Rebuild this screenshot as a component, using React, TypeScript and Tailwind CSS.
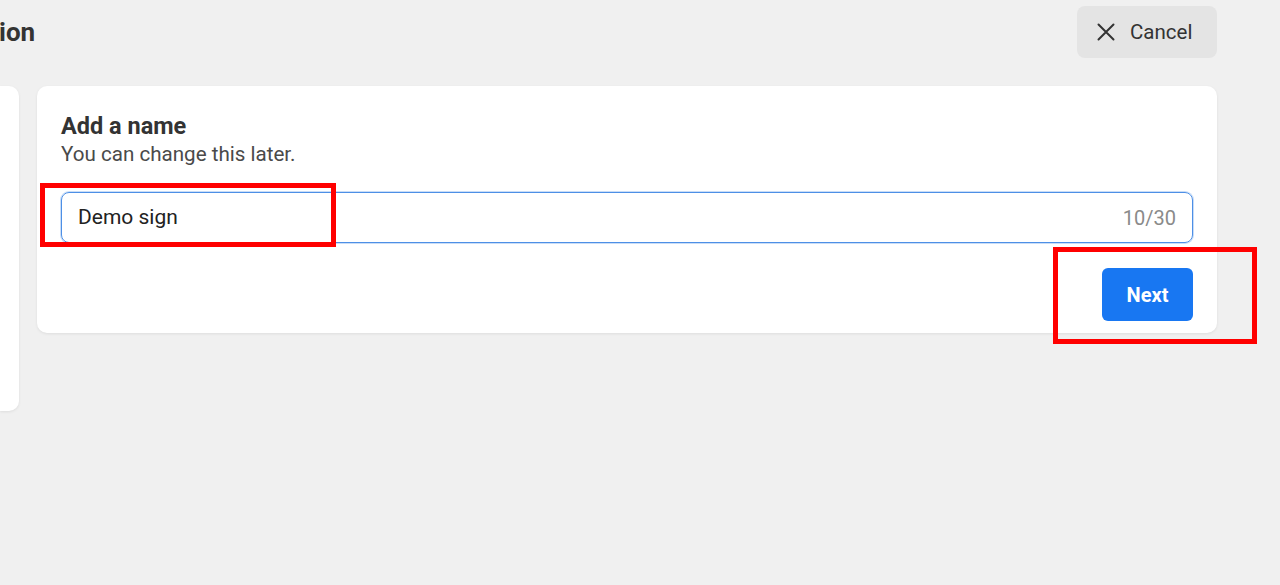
import React from "react";

const font = { fontFamily: "Roboto, 'Liberation Sans', sans-serif" };

const App: React.FC = () => {
  return (
    <div
      className="relative w-full h-[585px] overflow-hidden bg-[#f0f0f0] text-[#333]"
      style={font}
    >
      {/* Header */}
      <div className="flex items-center justify-between pt-[6px] pr-[63px]">
        <h1 className="text-[26px] font-bold leading-[52px] text-[#333] -ml-[1px]">ion</h1>
        <button
          type="button"
          className="flex items-center gap-[15px] h-[52px] w-[140px] pl-[20px] rounded-lg bg-[#e4e4e4] text-[20.5px] text-[#333]"
        >
          <svg width="18" height="18" viewBox="0 0 18 18" fill="none" stroke="#333" strokeWidth="2" strokeLinecap="round">
            <path d="M1.5 1.5 L16.5 16.5 M16.5 1.5 L1.5 16.5" />
          </svg>
          Cancel
        </button>
      </div>

      {/* Cards */}
      <div className="flex items-start gap-[18px] mt-[28px] pr-[63px]">
        <div className="w-[19px] h-[325px] bg-white rounded-r-[10px] shadow-[0_1px_3px_rgba(0,0,0,0.08)]" />
        <div className="flex-1 bg-white rounded-[10px] shadow-[0_1px_3px_rgba(0,0,0,0.08)] px-6 pt-[28px] pb-[12px]">
          <h2 className="text-[23.5px] font-bold leading-[24px] text-[#333]">Add a name</h2>
          <p className="text-[20.6px] leading-[22px] mt-[5px] text-[#4a4a4a]">You can change this later.</p>
          <div className="mt-[27px] h-[51px] flex items-center justify-between px-[16px] rounded-lg border border-[#4d8fe6] shadow-[0_0_0_1px_rgba(77,143,230,0.3)]">
            <span className="text-[21px] text-[#222]">Demo sign</span>
            <span className="text-[20px] text-[#8a8a8a]">10/30</span>
          </div>
          <div className="flex justify-end mt-[25px]">
            <button
              type="button"
              className="h-[53px] w-[91px] rounded-md bg-[#1877f2] text-white text-[20px] font-bold"
            >
              Next
            </button>
          </div>
        </div>
      </div>

      {/* Annotation boxes */}
      <div className="absolute left-[40px] top-[183px] w-[296px] h-[64px] border-[5px] border-[#ff0000]" />
      <div className="absolute left-[1053px] top-[247px] w-[204px] h-[97px] border-[5px] border-[#ff0000]" />
    </div>
  );
};

export default App;
